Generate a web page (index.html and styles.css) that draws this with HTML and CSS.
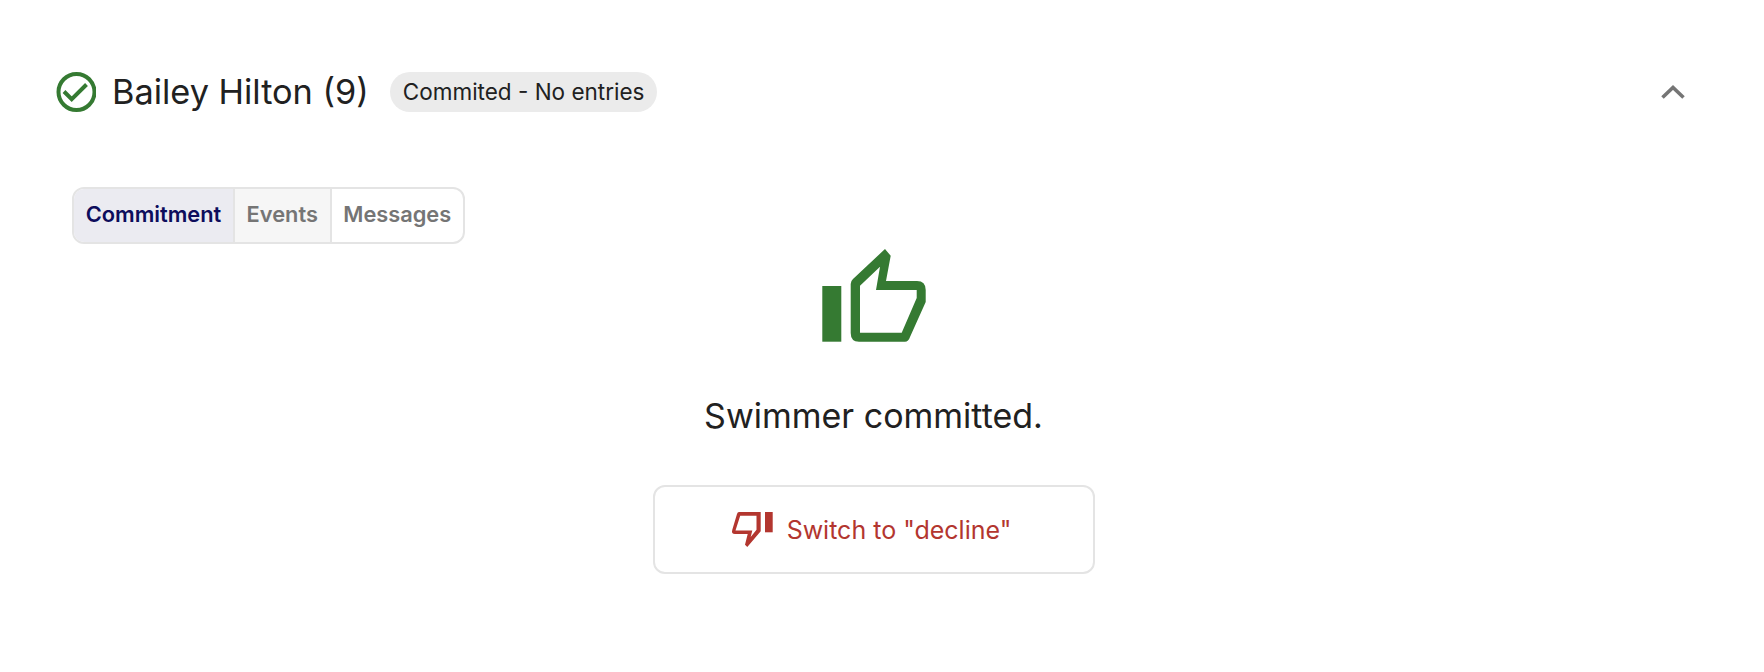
FILE: index.html
```html
<!DOCTYPE html>
<html lang="en">
<head>
    <meta charset="UTF-8">
    <title>Swimmer commitment</title>
    <link rel="stylesheet" href="styles.css">
</head>
<body>
    <div class="swimmer">
        <div class="swimmer-header">
            <svg class="check-icon" width="40" height="40" viewBox="0 0 40 40">
                <circle cx="20.500" cy="20" r="18" fill="none" stroke="#357a32" stroke-width="4"/>
                <path d="M8 19.500 L15.700 27.200 L30.500 12.500" fill="none" stroke="#357a32" stroke-width="4"/>
            </svg>
            <h2 class="swimmer-name">Bailey Hilton (9)</h2>
            <span class="chip">Commited - No entries</span>
            <svg class="chevron" width="24" height="16" viewBox="0 0 24 16">
                <path d="M1.500 13.500 L12 3.500 L22.500 13.500" fill="none" stroke="#757575" stroke-width="3.600"/>
            </svg>
        </div>

        <div class="tabs">
            <div class="tab active">Commitment</div>
            <div class="tab hover">Events</div>
            <div class="tab">Messages</div>
        </div>

        <div class="commitment">
            <svg class="thumb-up" width="108" height="97" viewBox="0 0 108 97">
                <rect x="2.300" y="39" width="19" height="55.700" fill="#357a32"/>
                <path fill-rule="evenodd" fill="#357a32" d="M65 2 L70.700 8.700 L66 34 H97 Q105.700 34 105.700 43 V55 L90 90 Q88.500 94.700 85 94.700 H39 Q30.700 94.700 30.700 86 V37 Q30.700 34 33 32 Z M60 19.700 L40 38.700 V85.700 H81.700 L96.700 51 V43 H56 Z"/>
            </svg>
            <p class="status">Swimmer committed.</p>
            <button class="switch-button">
                <svg width="44" height="40" viewBox="0 0 44 40">
                    <rect x="35" y="2" width="7.700" height="20.300" fill="#b3362f"/>
                    <path fill-rule="evenodd" fill="#b3362f" d="M9 2 H30.700 V21.300 L17.300 37 L15 34.700 L17.700 24 H5 Q1 24 2.300 19.700 L7 4 Q7.500 2 9 2 Z M10.200 5.800 H26.500 V19.700 L20.700 27 L22.300 20.500 H5.500 Z"/>
                </svg>
                <span>Switch to "decline"</span>
            </button>
        </div>
    </div>
</body>
</html>
```

FILE: styles.css
```css
body {
    margin: 0;
    background-color: white;
    color: #212121;
    font-family: Inter, "Liberation Sans", sans-serif;
}
.swimmer {
    padding: 72px 79px 0 56px;
}
.swimmer-header {
    display: flex;
    align-items: center;
    height: 40px;
}
.check-icon {
    margin-right: 16px;
}
.swimmer-name {
    margin: 0 21px 2px 0;
    font-size: 34.300px;
    font-weight: 400;
}
.chip {
    padding: 0 13px;
    line-height: 40px;
    border-radius: 20px;
    background-color: #ebebeb;
    font-size: 22.500px;
}
.chevron {
    margin-left: auto;
}
.tabs {
    display: inline-flex;
    margin: 75px 0 0 16px;
    border: 2px solid #e4e4e4;
    border-radius: 12px;
    overflow: hidden;
}
.tab {
    padding: 0 11.700px 2px;
    line-height: 51px;
    border-left: 2px solid #e4e4e4;
    color: #757575;
    font-size: 21.800px;
    font-weight: 600;
}
.tab:first-child {
    border-left: none;
}
.tab.active {
    background-color: #ebebf1;
    color: #0d0d5c;
}
.tab.hover {
    background-color: #f6f6f6;
}
.commitment {
    display: flex;
    flex-direction: column;
    align-items: center;
    padding-left: 6px;
}
.thumb-up {
    margin-top: 3px;
}
.status {
    margin: 52px 0 0;
    font-size: 34px;
    line-height: 40px;
}
.switch-button {
    display: flex;
    align-items: center;
    justify-content: center;
    gap: 13px;
    width: 442px;
    height: 89px;
    margin-top: 49px;
    padding: 0 6px 0 0;
    background-color: white;
    border: 2px solid #e4e4e4;
    border-radius: 12px;
    color: #b3362f;
    font-family: inherit;
    font-size: 25px;
}
```
